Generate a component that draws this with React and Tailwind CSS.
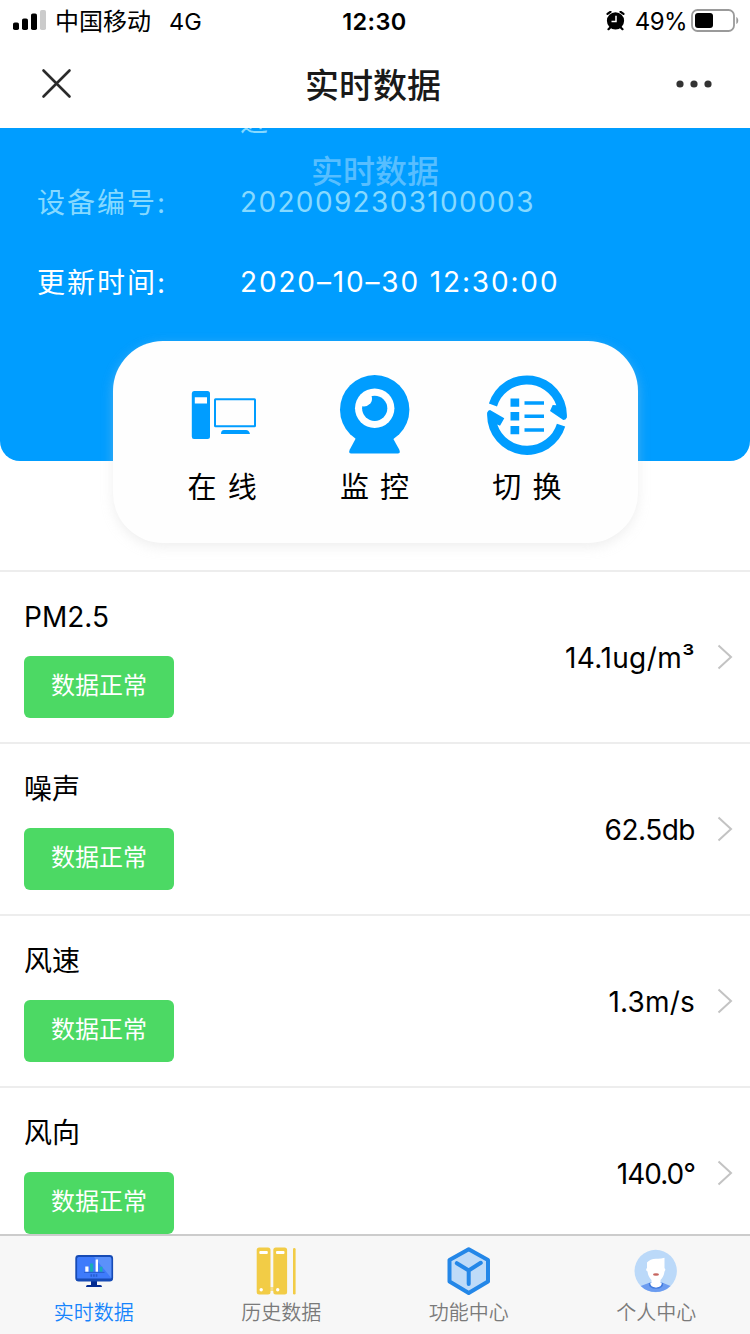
import React from "react";

const SENSORS = [
  { id: "pm25", name: "PM2.5", value: "14.1ug/m³", spacing: "tracking-[0.4px]" },
  { id: "noise", name: "噪声", value: "62.5db", spacing: "tracking-[-0.5px]" },
  { id: "speed", name: "风速", value: "1.3m/s", spacing: "tracking-[0.2px]" },
  { id: "direction", name: "风向", value: "140.0°", spacing: "tracking-[-1px]" },
];

// ─── Status bar icons ─────────────────────────────────────────────────────────
function SignalIcon() {
  return (
    <svg className="w-[34px] h-[22px] flex-shrink-0" viewBox="0 0 34 22">
      <rect x="0" y="12.5" width="6" height="7.5" rx="1.8" />
      <rect x="9" y="8.5" width="6" height="11.5" rx="1.8" />
      <rect x="18" y="3.5" width="6" height="16.5" rx="1.8" />
      <rect x="27" y="0" width="6" height="20" rx="1.8" fill="#cbcbcb" />
    </svg>
  );
}

function AlarmIcon() {
  return (
    <svg className="w-5 h-[21px] flex-shrink-0" viewBox="0 0 20 21">
      <circle cx="9.5" cy="9.8" r="8.6" />
      <path
        d="M1.500 2.800 4.500.8M17.500 2.800 14.500.8M4 16.700 2.500 18.200M15 16.700 16.500 18.200"
        stroke="#000"
        strokeWidth="2.2"
        strokeLinecap="round"
      />
      <path d="M10 4.800v5.600H5.500" fill="none" stroke="#fff" strokeWidth="1.5" />
    </svg>
  );
}

function BatteryIcon() {
  return (
    <svg className="w-[48px] h-6 flex-shrink-0" viewBox="0 0 48 24">
      <rect x="1" y="1" width="42" height="21" rx="5.5" fill="none" stroke="#9a9a9a" strokeWidth="1.8" />
      <rect x="4" y="4" width="18" height="15" rx="3" />
      <path d="M45.300 8c2.600 1 2.600 6 0 7z" fill="#9a9a9a" />
    </svg>
  );
}

// ─── Action icons ─────────────────────────────────────────────────────────────
function ComputerIcon() {
  return (
    <svg className="w-20 h-20" viewBox="0 0 80 80" fill="#009dff">
      <path
        fillRule="evenodd"
        d="M12 16h13.5q2.500 0 2.500 2.500v43q0 2.500-2.500 2.500H12q-2.200 0-2.200-2.500v-43Q9.800 16 12 16zM12.800 22.200v6.300H25v-6.300z"
      />
      <rect x="33" y="24.2" width="40" height="27" rx="0.5" fill="none" stroke="#009dff" strokeWidth="2" />
      <path d="M42 55h22q3 0 4 4H39q0-4 3-4z" />
    </svg>
  );
}

function WebcamIcon() {
  return (
    <svg className="w-20 h-20" viewBox="0 0 80 80" fill="#009dff">
      <circle cx="40.7" cy="34.7" r="34.7" />
      <path d="M22.800 61.500 15.800 74.500q-1.800 4 1.500 4h46.400q3.300 0 1.500-4L58 61.500z" />
      <circle cx="40.7" cy="33.3" r="19.7" fill="#fff" />
      <circle cx="40.7" cy="33.3" r="12.6" />
      <path d="M27 21h10.500q1.500 4-1.200 7.500-3.800 4-9.300 2.500z" fill="#fff" />
    </svg>
  );
}

function SwitchIcon() {
  return (
    <svg className="w-20 h-20" viewBox="0 0 80 80" fill="#009dff">
      <path d="M1.900 28.500A39.900 39.900 0 0 1 79.900 40v2.500q-1.200 2.500-3.600 2.500L63 36l2.700-6 3.600.2A31.300 31.300 0 0 0 10 31.500z" />
      <path d="M78.200 51.500A39.900 39.900 0 0 1 .1 40v-2.200Q1 35.300 3 35l14.300 8.300-4.300 7.400-2.700-1.200A31.300 31.300 0 0 0 69.900 48.700z" />
      <path d="M23.500 23.500h8.700v8.300h-8.700zM23.500 37h8.700v8.500h-8.700zM23.500 51h8.700v8.300h-8.700z" />
      <path d="M37.500 26.200H57v3.500H37.500zM37.500 39.500H57v3.500H37.500zM37.500 53.200H57v3.500H37.500z" />
    </svg>
  );
}

// ─── Tab icons ────────────────────────────────────────────────────────────────
function MonitorIcon() {
  return (
    <svg className="w-12 h-12" viewBox="0 0 48 48">
      <path d="M21 34h6v4.500h-6z" fill="#032b91" />
      <path d="M17.500 38h12.800q1.700 0 1.700 2H16q0-2 1.500-2z" fill="#032b91" />
      <rect x="6.200" y="9" width="36" height="24.500" rx="2.500" fill="#3e7bfb" stroke="#174bb4" strokeWidth="1.800" />
      <path d="M24 9.900h15.500q1.800 0 1.800 2V31z" fill="#5b91fa" />
      <path d="M6 31.500h36.500v1q0 1.500-2 1.500H8q-2 0-2-1.500z" fill="#174bb4" />
      <path d="M15.300 19.500h3.200v5.300h-3.200zM25.600 12.500H28v12.300h-2.400z" fill="#fff" />
      <path d="M20 16.500h3.200v8.300H20zM29.700 19.800h2.800v5h-2.800z" fill="#18aeb6" />
      <path d="M14 25.400h20.500" stroke="#174bb4" strokeWidth="0.6" />
      <path d="M20.500 28.500h7.500" stroke="#174bb4" strokeWidth="2.4" strokeDasharray="1.600 1" opacity="0.6" />
    </svg>
  );
}

function BindersIcon() {
  return (
    <svg className="w-12 h-12 overflow-visible" viewBox="0 0 48 48" fill="#f2cc46">
      <rect x="-0.3" y="0.500" width="13.800" height="47" rx="2.500" />
      <rect x="16.300" y="0.500" width="13.800" height="47" rx="2.500" />
      <rect x="36" y="1" width="2.600" height="46.500" rx="1.300" />
      <path d="M13 40h4v4h-4z" opacity="0.6" />
      <rect x="2.300" y="4" width="8.500" height="3" rx="1" fill="#fff" />
      <rect x="19" y="4" width="8.500" height="3" rx="1" fill="#fff" />
      <circle cx="4.200" cy="42.700" r="1.700" fill="#fff" />
      <circle cx="20.700" cy="42.700" r="1.700" fill="#fff" />
    </svg>
  );
}

function CubeIcon() {
  return (
    <svg className="w-12 h-12" viewBox="0 0 48 48" stroke="#2487e8" strokeLinecap="round" strokeLinejoin="round">
      <path d="M23.700 2.300 43 13v21.500L23.700 46 4.500 34.500V13z" fill="#bfdbf8" strokeWidth="4" />
      <path d="M11.800 16.200 23.700 23.500 35.800 15.800M23.700 23.500V37" fill="none" strokeWidth="4" />
    </svg>
  );
}

function AvatarIcon() {
  return (
    <svg className="w-12 h-12" viewBox="0 0 48 48">
      <circle cx="23.700" cy="24" r="21.200" fill="#bbd9f9" />
      <path d="M8.700 39 18 35.500h12l8.500 3.500a21.200 21.200 0 0 1-29.800 0z" fill="#6b9cf0" />
      <path d="M17.500 36q0 5 6.500 5t6.500-5" fill="#fff" stroke="#427bdf" strokeWidth="1.500" />
      <path
        d="M15 15.500q3-3.800 9-3.800 4 .5 8.500-1v10.500q1.700 1 0 3.300-.7 5.500-4 8.500V38q-4.500 5-9 0v-5q-3.300-3-4-8.500-2.500-1.500-.5-3.500z"
        fill="#fff"
      />
      <ellipse cx="24" cy="27.500" rx="3" ry="1.300" fill="#c76660" />
    </svg>
  );
}

const ACTIONS = [
  { label: "在 线", Icon: ComputerIcon },
  { label: "监 控", Icon: WebcamIcon },
  { label: "切 换", Icon: SwitchIcon },
];

const TABS = [
  { label: "实时数据", Icon: MonitorIcon, active: true },
  { label: "历史数据", Icon: BindersIcon },
  { label: "功能中心", Icon: CubeIcon },
  { label: "个人中心", Icon: AvatarIcon },
];

// ─── Header ───────────────────────────────────────────────────────────────────
function StatusBar() {
  return (
    <div className="grid grid-cols-[1fr_auto_1fr] items-center h-10 pl-[13px] pr-[11px] text-2xl leading-10 text-black">
      <div className="flex items-center">
        <SignalIcon />
        <span className="ml-2 pt-0.5">中国移动</span>
        <span className="ml-[18px] pt-0.5 text-[23.5px]">4G</span>
      </div>
      <span className="pt-px pr-[3px] font-semibold text-[23.5px] tracking-[0.4px]">12:30</span>
      <div className="flex items-center justify-end">
        <AlarmIcon />
        <span className="ml-[9px] mr-1 pt-px text-[24px] tracking-[-0.6px]">49%</span>
        <BatteryIcon />
      </div>
    </div>
  );
}

function NavBar() {
  return (
    <div className="grid grid-cols-3 items-center h-[88px] pl-8 pr-9">
      <svg className="w-10 h-8" viewBox="-8 0 40 32" stroke="#2b2b2b" strokeWidth="2.6" strokeLinecap="round">
        <path d="M3.500 2.500 29.500 28.500M29.500 2.500 3.500 28.500" />
      </svg>
      <h1 className="pt-[3px] text-center text-[34px] font-medium text-[#191919]">实时数据</h1>
      <svg className="w-10 h-8 justify-self-end" viewBox="0 0 40 32" fill="#333">
        <circle cx="6" cy="16" r="3.6" />
        <circle cx="20" cy="16" r="3.6" />
        <circle cx="34" cy="16" r="3.6" />
      </svg>
    </div>
  );
}

// ─── Device info ──────────────────────────────────────────────────────────────
function InfoRow({ label, value, muted }) {
  return (
    <div
      className={`flex items-center h-20 pl-[37px] text-[28px] ${
        muted ? "text-[#86d9ff]" : "text-white"
      }`}
    >
      <span className="w-[203px] flex-shrink-0 pt-[3px] tracking-[2px]">{label}</span>
      <span className={`pt-px whitespace-nowrap ${muted ? "tracking-[1.35px]" : "tracking-[1.85px]"}`}>
        {value}
      </span>
    </div>
  );
}

function ActionCard() {
  return (
    <div className="relative w-[525px] h-[202px] -mt-[120px] ml-[113px] pl-[33px] pr-[35px] pt-[34px] grid grid-cols-3 rounded-[50px] bg-[#fefefe] shadow-[0_4px_12px_rgba(210,210,210,0.35)]">
      {ACTIONS.map(({ label, Icon }) => (
        <button key={label} className="flex flex-col items-center text-black">
          <Icon />
          <span className="mt-[11px] text-[29px] leading-[44px] [word-spacing:3px]">{label}</span>
        </button>
      ))}
    </div>
  );
}

// ─── Sensor list ──────────────────────────────────────────────────────────────
function SensorRow({ name, value, spacing }) {
  return (
    <li className="flex items-center justify-between h-[172px] flex-shrink-0 pl-6 pr-[17px] border-t-2 border-[#ededed] text-black">
      <div className="flex flex-col">
        <span className="h-10 text-[28px] leading-[42px]">{name}</span>
        <span className="mt-5 w-[150px] h-[62px] rounded-md bg-[#4cd964] text-center text-2xl leading-[60px] text-white">
          数据正常
        </span>
      </div>
      <div className="flex items-center">
        <span className={`pt-px text-[28px] ${spacing}`}>{value}</span>
        <svg className="ml-[22px] w-4 h-7" viewBox="0 0 16 28" fill="none" stroke="#c3c3c3" strokeWidth="2">
          <path d="M1.500 2.500 14 14 1.500 25.500" />
        </svg>
      </div>
    </li>
  );
}

function TabBar() {
  return (
    <nav className="grid grid-cols-4 h-[100px] flex-shrink-0 border-t-2 border-[#cccccc] bg-[#f7f7f7]">
      {TABS.map(({ label, Icon, active }) => (
        <button
          key={label}
          className={`flex flex-col items-center pt-[11px] text-xl leading-9 font-[350] ${
            active ? "text-[#1684fc]" : "text-[#7a7a7a]"
          }`}
        >
          <Icon />
          <span>{label}</span>
        </button>
      ))}
    </nav>
  );
}

// ─── Main component ───────────────────────────────────────────────────────────
export default function App() {
  return (
    <div className="flex flex-col w-[750px] h-[1334px] overflow-hidden bg-white font-['Inter','Noto_Sans_CJK_SC',sans-serif]">
      <header className="flex-shrink-0">
        <StatusBar />
        <NavBar />
      </header>
      <main className="flex-1 min-h-0 overflow-hidden">
        <section className="relative h-[333px] overflow-hidden rounded-b-[20px] bg-[#009dff]">
          <div className="-mt-[47px]">
            <InfoRow value="近" muted />
            <InfoRow label="设备编号:" value="2020092303100003" muted />
            <InfoRow label="更新时间:" value="2020–10–30 12:30:00" />
          </div>
          {/* Page title fading out over the scrolled rows */}
          <div className="absolute inset-x-0 top-5 text-center text-[32px] leading-[48px] font-medium text-white/35">
            实时数据
          </div>
        </section>
        <ActionCard />
        <ul className="mt-[27px] flex flex-col">
          {SENSORS.map((sensor) => (
            <SensorRow
              key={sensor.id}
              name={sensor.name}
              value={sensor.value}
              spacing={sensor.spacing}
            />
          ))}
        </ul>
      </main>
      <TabBar />
    </div>
  );
}
